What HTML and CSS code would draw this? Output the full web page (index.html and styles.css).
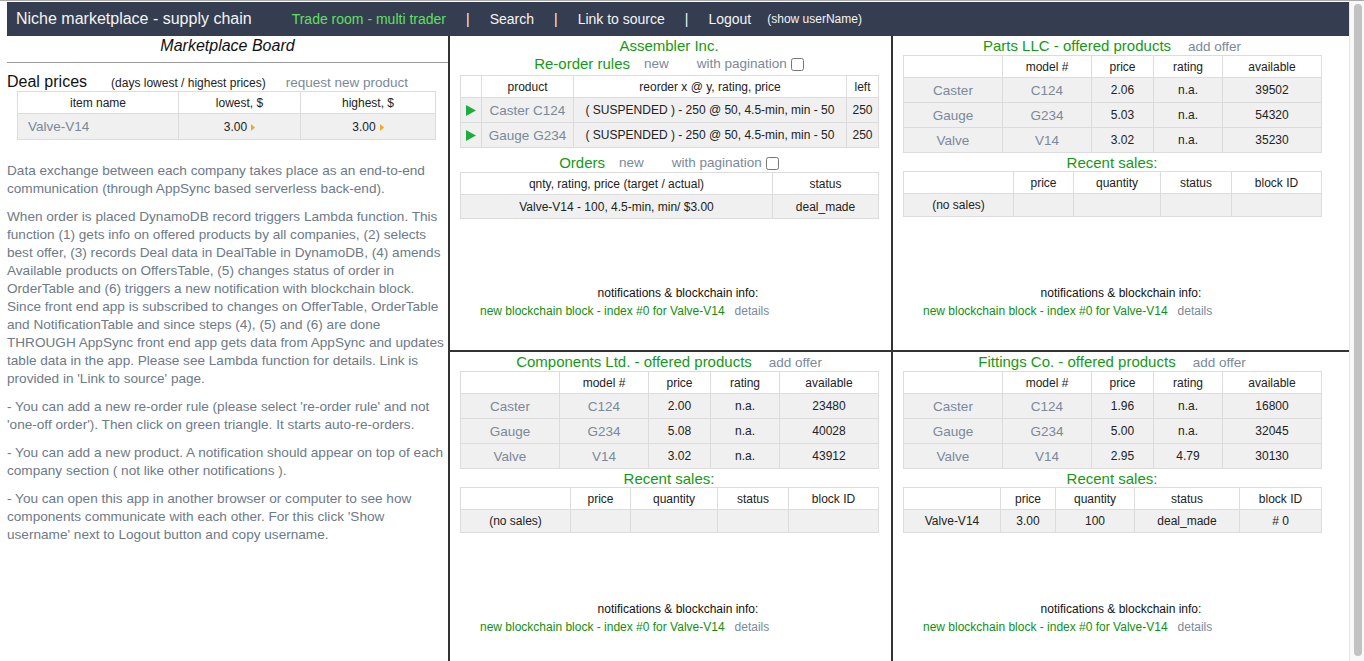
FILE: index.html
```html
<!DOCTYPE html>
<html>
<head>
<meta charset="utf-8">
<title>Niche marketplace - supply chain</title>
<link rel="stylesheet" href="styles.css">
</head>
<body>
<div class="topline"></div>
<div class="page">
  <header class="nav">
    <span class="brand">Niche marketplace - supply chain</span>
    <span class="nav-active">Trade room - multi trader</span>
    <span class="sep">|</span>
    <span class="nav-link">Search</span>
    <span class="sep">|</span>
    <span class="nav-link">Link to source</span>
    <span class="sep">|</span>
    <span class="nav-link">Logout</span>
    <span class="nav-small">(show userName)</span>
  </header>

  <div class="main">
    <aside class="board">
      <div class="board-title">Marketplace Board</div>
      <div class="board-rule"></div>
      <div class="deal-head">
        <span class="deal-title">Deal prices</span>
        <span class="deal-note">(days lowest / highest prices)</span>
        <span class="link deal-link">request new product</span>
      </div>
      <table class="grid deal">
        <colgroup><col class="c161"><col class="c122"><col class="c135"></colgroup>
        <tr class="head"><td>item name</td><td>lowest, $</td><td>highest, $</td></tr>
        <tr class="row"><td class="left link big">Valve-V14</td><td>3.00<svg class="tri-o" viewBox="0 0 4 7"><polygon points="0,0 4,3.5 0,7"/></svg></td><td>3.00<svg class="tri-o" viewBox="0 0 4 7"><polygon points="0,0 4,3.5 0,7"/></svg></td></tr>
      </table>
      <div class="info">
        <p>Data exchange between each company takes place as an end-to-end<br>communication (through AppSync based serverless back-end).</p>
        <p>When order is placed DynamoDB record triggers Lambda function. This<br>function (1) gets info on offered products by all companies, (2) selects<br>best offer, (3) records Deal data in DealTable in DynamoDB, (4) amends<br>Available products on OffersTable, (5) changes status of order in<br>OrderTable and (6) triggers a new notification with blockchain block.<br>Since front end app is subscribed to changes on OfferTable, OrderTable<br>and NotificationTable and since steps (4), (5) and (6) are done<br>THROUGH AppSync front end app gets data from AppSync and updates<br>table data in the app. Please see Lambda function for details. Link is<br>provided in 'Link to source' page.</p>
        <p>- You can add a new re-order rule (please select 're-order rule' and not<br>'one-off order'). Then click on green triangle. It starts auto-re-orders.</p>
        <p>- You can add a new product. A notification should appear on top of each<br>company section ( not like other notifications ).</p>
        <p>- You can open this app in another browser or computer to see how<br>components communicate with each other. For this click 'Show<br>username' next to Logout button and copy username.</p>
      </div>
    </aside>

    <div class="quads">
      <!-- Assembler -->
      <section class="quad q-tl">
        <div class="qbody">
          <div class="q-title">Assembler Inc.</div>
          <div class="sub-head">
            <span class="sub-title">Re-order rules</span>
            <span class="link l-new">new</span>
            <span class="link l-pag">with pagination</span>
            <input type="checkbox" class="chk">
          </div>
          <table class="grid reorder">
            <colgroup><col class="c21"><col class="c92"><col class="c273"><col class="c32"></colgroup>
            <tr class="head"><td></td><td>product</td><td>reorder x @ y, rating, price</td><td>left</td></tr>
            <tr class="row"><td><svg class="tri-g" viewBox="0 0 10 11"><polygon points="0,0 10,5.5 0,11"/></svg></td><td class="link big">Caster C124</td><td>( SUSPENDED ) - 250 @ 50, 4.5-min, min - 50</td><td>250</td></tr>
            <tr class="row"><td><svg class="tri-g" viewBox="0 0 10 11"><polygon points="0,0 10,5.5 0,11"/></svg></td><td class="link big">Gauge G234</td><td>( SUSPENDED ) - 250 @ 50, 4.5-min, min - 50</td><td>250</td></tr>
          </table>
          <div class="sub-head orders-head">
            <span class="sub-title">Orders</span>
            <span class="link l-new">new</span>
            <span class="link l-pag">with pagination</span>
            <input type="checkbox" class="chk">
          </div>
          <table class="grid orders">
            <colgroup><col class="c312"><col class="c106"></colgroup>
            <tr class="head"><td>qnty, rating, price (target / actual)</td><td>status</td></tr>
            <tr class="srow"><td>Valve-V14 - 100, 4.5-min, min/ $3.00</td><td>deal_made</td></tr>
          </table>
        </div>
        <div class="notes">
          <div class="notes-title">notifications &amp; blockchain info:</div>
          <div class="notes-line">new blockchain block - index #0 for Valve-V14<span class="link details">details</span></div>
        </div>
      </section>

      <!-- Parts LLC -->
      <section class="quad q-tr">
        <div class="qbody">
          <div class="q-title">Parts LLC - offered products<span class="link add">add offer</span></div>
          <table class="grid offers">
            <colgroup><col class="c99"><col class="c89"><col class="c62"><col class="c69"><col class="c99"></colgroup>
            <tr class="head"><td></td><td>model #</td><td>price</td><td>rating</td><td>available</td></tr>
            <tr class="row"><td class="link big">Caster</td><td class="link big">C124</td><td>2.06</td><td>n.a.</td><td>39502</td></tr>
            <tr class="row"><td class="link big">Gauge</td><td class="link big">G234</td><td>5.03</td><td>n.a.</td><td>54320</td></tr>
            <tr class="row"><td class="link big">Valve</td><td class="link big">V14</td><td>3.02</td><td>n.a.</td><td>35230</td></tr>
          </table>
          <div class="sales-title">Recent sales:</div>
          <table class="grid sales">
            <colgroup><col class="c110"><col class="c60"><col class="c87"><col class="c71"><col class="c90"></colgroup>
            <tr class="head"><td></td><td>price</td><td>quantity</td><td>status</td><td>block ID</td></tr>
            <tr class="srow"><td>(no sales)</td><td></td><td></td><td></td><td></td></tr>
          </table>
        </div>
        <div class="notes">
          <div class="notes-title">notifications &amp; blockchain info:</div>
          <div class="notes-line">new blockchain block - index #0 for Valve-V14<span class="link details">details</span></div>
        </div>
      </section>

      <!-- Components Ltd -->
      <section class="quad q-bl">
        <div class="qbody">
          <div class="q-title">Components Ltd. - offered products<span class="link add">add offer</span></div>
          <table class="grid offers">
            <colgroup><col class="c99"><col class="c89"><col class="c62"><col class="c69"><col class="c99"></colgroup>
            <tr class="head"><td></td><td>model #</td><td>price</td><td>rating</td><td>available</td></tr>
            <tr class="row"><td class="link big">Caster</td><td class="link big">C124</td><td>2.00</td><td>n.a.</td><td>23480</td></tr>
            <tr class="row"><td class="link big">Gauge</td><td class="link big">G234</td><td>5.08</td><td>n.a.</td><td>40028</td></tr>
            <tr class="row"><td class="link big">Valve</td><td class="link big">V14</td><td>3.02</td><td>n.a.</td><td>43912</td></tr>
          </table>
          <div class="sales-title">Recent sales:</div>
          <table class="grid sales">
            <colgroup><col class="c110"><col class="c60"><col class="c87"><col class="c71"><col class="c90"></colgroup>
            <tr class="head"><td></td><td>price</td><td>quantity</td><td>status</td><td>block ID</td></tr>
            <tr class="srow"><td>(no sales)</td><td></td><td></td><td></td><td></td></tr>
          </table>
        </div>
        <div class="notes">
          <div class="notes-title">notifications &amp; blockchain info:</div>
          <div class="notes-line">new blockchain block - index #0 for Valve-V14<span class="link details">details</span></div>
        </div>
      </section>

      <!-- Fittings Co -->
      <section class="quad q-br">
        <div class="qbody">
          <div class="q-title">Fittings Co. - offered products<span class="link add">add offer</span></div>
          <table class="grid offers">
            <colgroup><col class="c99"><col class="c89"><col class="c62"><col class="c69"><col class="c99"></colgroup>
            <tr class="head"><td></td><td>model #</td><td>price</td><td>rating</td><td>available</td></tr>
            <tr class="row"><td class="link big">Caster</td><td class="link big">C124</td><td>1.96</td><td>n.a.</td><td>16800</td></tr>
            <tr class="row"><td class="link big">Gauge</td><td class="link big">G234</td><td>5.00</td><td>n.a.</td><td>32045</td></tr>
            <tr class="row"><td class="link big">Valve</td><td class="link big">V14</td><td>2.95</td><td>4.79</td><td>30130</td></tr>
          </table>
          <div class="sales-title">Recent sales:</div>
          <table class="grid sales">
            <colgroup><col class="c97"><col class="c55"><col class="c79"><col class="c105"><col class="c82"></colgroup>
            <tr class="head"><td></td><td>price</td><td>quantity</td><td>status</td><td>block ID</td></tr>
            <tr class="srow"><td>Valve-V14</td><td>3.00</td><td>100</td><td>deal_made</td><td># 0</td></tr>
          </table>
        </div>
        <div class="notes">
          <div class="notes-title">notifications &amp; blockchain info:</div>
          <div class="notes-line">new blockchain block - index #0 for Valve-V14<span class="link details">details</span></div>
        </div>
      </section>
    </div>
  </div>
</div>
<div class="scrollbar"><div class="scroll-thumb"></div></div>
</body>
</html>
```

FILE: styles.css
```css
html, body {
  margin: 0;
  padding: 0;
  background: #fff;
  overflow: hidden;
}
body {
  font-family: "Liberation Sans", Arial, Helvetica, sans-serif;
  color: #222;
}
.topline {
  height: 1px;
  background: #a9a9a9;
  margin-bottom: 1px;
}
.page {
  padding-left: 7px;
  padding-right: 15px;
}

/* fake window scrollbar (overlay) */
.scrollbar {
  position: fixed;
  top: 1px;
  right: 0;
  bottom: 0;
  width: 14px;
  background: #f8f8f8;
  border-left: 1px solid #e6e6e6;
}
.scroll-thumb {
  position: absolute;
  top: 3px;
  bottom: 5px;
  left: 4px;
  width: 8px;
  border-radius: 4px;
  background: #c2c2c2;
}

/* header */
.nav {
  height: 34px;
  background: #343e50;
  display: flex;
  align-items: center;
  color: #f4f4f4;
  white-space: nowrap;
}
.brand {
  font-size: 16px;
  padding-left: 9px;
  margin-right: 40px;
}
.nav-active {
  font-size: 14px;
  color: #5fe05f;
}
.sep {
  font-size: 14px;
  margin: 0 20px;
}
.nav-link {
  font-size: 14px;
}
.nav-small {
  font-size: 12px;
  margin-left: 16px;
}

/* layout */
.main {
  display: flex;
  height: 630px;
}
.board {
  box-sizing: border-box;
  width: 443px;
  border-right: 2px solid #333;
  flex: none;
}
.quads {
  flex: 1;
  display: grid;
  grid-template-columns: 443px 1fr;
  grid-template-rows: 316px 314px;
}
.quad {
  box-sizing: border-box;
  display: flex;
  flex-direction: column;
  min-width: 0;
}
.q-tl { border-right: 2px solid #333; border-bottom: 2px solid #333; }
.q-tr { border-bottom: 2px solid #333; }
.q-bl { border-right: 2px solid #333; }

/* left board */
.board-title {
  font-size: 16px;
  font-style: italic;
  line-height: 18px;
  padding-top: 1px;
  text-align: center;
  color: #111;
}
.board-rule {
  margin-top: 7px;
  height: 1px;
  background: #9a9a9a;
}
.deal-head {
  margin-top: 10px;
  height: 18px;
  line-height: 18px;
  display: flex;
  align-items: baseline;
  white-space: nowrap;
}
.deal-title {
  font-size: 16px;
  color: #111;
}
.deal-note {
  font-size: 12px;
  margin-left: 24px;
  color: #222;
}
.deal-link {
  font-size: 13.5px;
  margin-left: 20px;
}
.info {
  margin-top: 22px;
  font-size: 13.6px;
  line-height: 18px;
  color: #6d7a88;
  white-space: nowrap;
}
.info p {
  margin: 0 0 10px 0;
}

/* links */
.link {
  color: #7a899a;
}
.big {
  font-size: 13.5px;
}
.left {
  text-align: left !important;
  padding-left: 10px !important;
}

/* tables */
.grid {
  border-collapse: collapse;
  table-layout: fixed;
  width: 418px;
  font-size: 12px;
  color: #222;
}
.deal {
  margin-left: 10px;
}
.offers {
  margin-top: 1px;
}
.grid td {
  border: 1px solid #dcdcdc;
  text-align: center;
  padding: 0;
  white-space: nowrap;
  overflow: hidden;
}
.grid tr.head { height: 22px; background: #fff; }
.grid tr.row { height: 25px; background: #f0f0f0; }
.grid tr.srow { height: 23px; background: #f0f0f0; }
.deal tr.row { height: 26px; }
.orders tr.srow { height: 24px; }

.c21 { width: 21px; } .c32 { width: 32px; } .c55 { width: 55px; }
.c60 { width: 60px; } .c62 { width: 62px; } .c69 { width: 69px; }
.c71 { width: 71px; } .c79 { width: 79px; } .c82 { width: 82px; }
.c87 { width: 87px; } .c89 { width: 89px; } .c90 { width: 90px; }
.c92 { width: 92px; } .c97 { width: 97px; } .c99 { width: 99px; }
.c105 { width: 105px; } .c106 { width: 106px; } .c110 { width: 110px; }
.c122 { width: 122px; } .c135 { width: 135px; } .c161 { width: 161px; }
.c273 { width: 273px; } .c312 { width: 312px; }

.tri-o {
  width: 4px;
  height: 7px;
  margin-left: 4px;
  fill: #f5a623;
}
.tri-g {
  display: block;
  width: 10px;
  height: 11px;
  margin: 0 auto;
  fill: #1fae3c;
}

/* quadrant content */
.qbody {
  width: 418px;
  margin-left: 10px;
}
.q-title {
  font-size: 15px;
  line-height: 18px;
  padding-top: 1px;
  height: 17px;
  overflow: visible;
  text-align: center;
  color: #149a14;
  white-space: nowrap;
}
.add {
  font-size: 13.5px;
  margin-left: 17px;
}
.sub-head {
  display: flex;
  justify-content: center;
  align-items: center;
  height: 18px;
  line-height: 18px;
  margin-top: 1px;
  margin-bottom: 2px;
  white-space: nowrap;
}
.orders-head {
  margin-top: 6px;
  margin-bottom: 0;
}
.sub-title {
  font-size: 15px;
  color: #149a14;
}
.l-new {
  font-size: 13.5px;
  margin-left: 14px;
}
.l-pag {
  font-size: 13.5px;
  margin-left: 28px;
}
.chk {
  width: 13px;
  height: 13px;
  margin: 1px 0 0 4px;
}
.sales-title {
  font-size: 15px;
  line-height: 17px;
  margin-top: 1px;
  text-align: center;
  color: #149a14;
}

.notes {
  margin-top: auto;
  margin-left: 0;
  padding-bottom: 30px;
  width: 456px;
  font-size: 12px;
  line-height: 18px;
  white-space: nowrap;
}
.notes-title {
  text-align: center;
  color: #111;
}
.notes-line {
  padding-left: 30px;
  color: #109010;
}
.details {
  margin-left: 10px;
}
```
